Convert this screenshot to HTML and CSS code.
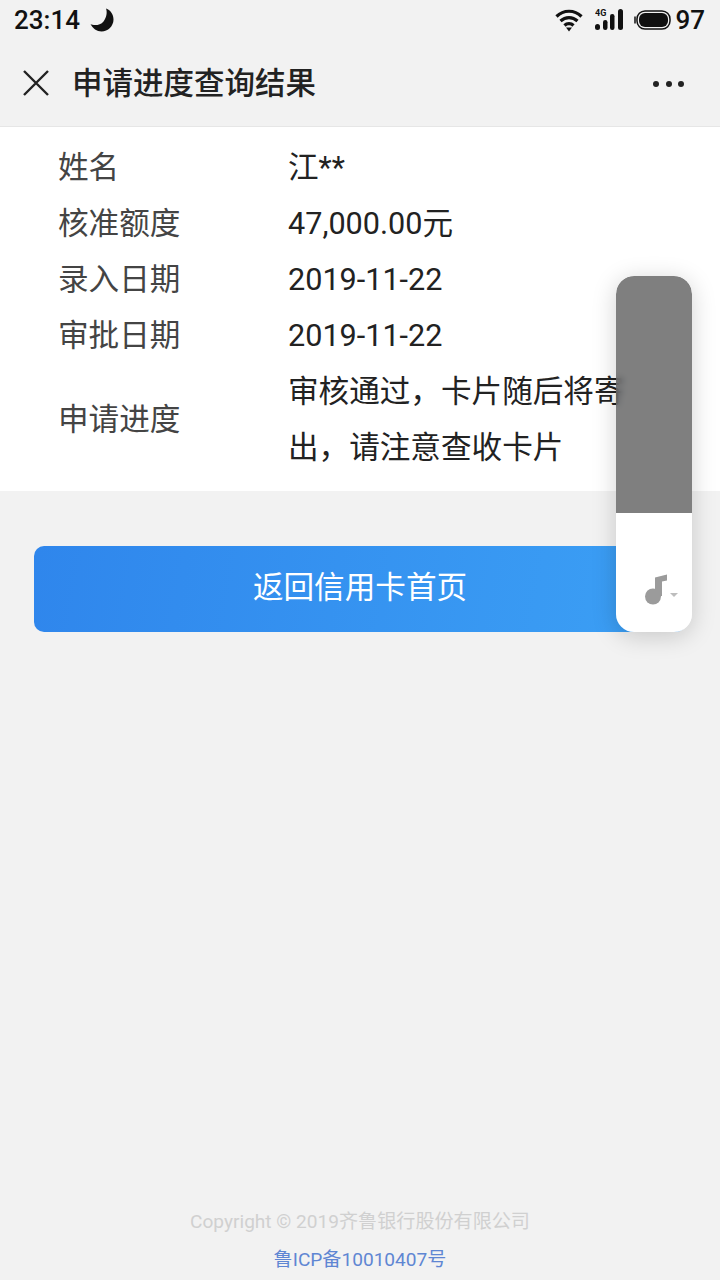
FILE: index.html
```html
<!DOCTYPE html>
<html lang="zh-CN">
<head>
    <meta charset="UTF-8">
    <meta name="viewport" content="width=device-width, initial-scale=1.0">
    <title>申请进度查询结果</title>
    <link rel="stylesheet" href="styles.css">
</head>
<body>
    <div class="status-bar">
        <div class="status-left">
            <span>23:14</span>
            <svg width="24" height="24" viewBox="0 0 24 24"><path d="M16 .5C21 2 23.500 7 23.500 11.500C23.500 18 18 23.500 11.500 23.500C7 23.500 2.500 20.500 .5 16C3 17.500 10 18 13.500 13.500C16.500 9.500 17.500 4.500 16 .5Z" fill="#111"/></svg>
        </div>
        <div class="status-right">
            <svg class="wifi" width="28" height="24" viewBox="0 0 28 24" fill="none" stroke="#111" stroke-width="3.200"><path d="M1.500 8.500C8.500 1.500 19.500 1.500 26.500 8.500"/><path d="M5.500 13C10.500 8.500 17.500 8.500 22.500 13"/><path d="M9.500 17.500C12 15 16 15 18.500 17.500"/><path d="M11 19.500L14 23.500L17 19.500Z" fill="#111" stroke="none"/></svg>
            <svg class="signal" width="28" height="24" viewBox="0 0 28 24"><text x="0" y="8" class="net-label">4G</text><rect x="0" y="16" width="5" height="6" rx="2.500" fill="#111"/><rect x="8" y="12" width="4.500" height="10" rx="2.200" fill="#111"/><rect x="15" y="6" width="4.500" height="16" rx="2.200" fill="#111"/><rect x="23" y="1" width="5" height="21" rx="2.500" fill="#111"/></svg>
            <svg class="battery" width="37" height="20" viewBox="0 0 37 20"><path d="M1 6.500V13.500" stroke="#111" stroke-width="1.500" fill="none"/><rect x="3" y="1" width="33" height="18" rx="8" fill="none" stroke="#111" stroke-width="1.500"/><rect x="5" y="3" width="29" height="14" rx="6" fill="#111"/></svg>
            <span>97</span>
        </div>
    </div>

    <header class="nav-bar">
        <svg width="28" height="28" viewBox="0 0 28 28" fill="none" stroke="#222" stroke-width="2.400"><path d="M2 2L26 26M26 2L2 26"/></svg>
        <h1>申请进度查询结果</h1>
        <div class="nav-more"><i></i><i></i><i></i></div>
    </header>

    <main class="result-card">
        <div class="row"><div class="label">姓名</div><div class="value">江**</div></div>
        <div class="row"><div class="label">核准额度</div><div class="value">47,000.00元</div></div>
        <div class="row"><div class="label">录入日期</div><div class="value">2019-11-22</div></div>
        <div class="row"><div class="label">审批日期</div><div class="value">2019-11-22</div></div>
        <div class="row"><div class="label">申请进度</div><div class="value">审核通过，卡片随后将寄出，请注意查收卡片</div></div>
    </main>

    <a class="back-btn" href="#">返回信用卡首页</a>

    <footer class="page-footer">
        <p class="copyright">Copyright © 2019齐鲁银行股份有限公司</p>
        <p class="icp">鲁ICP备10010407号</p>
    </footer>

    <!-- 浮动音乐面板 -->
    <div class="float-panel">
        <div class="float-top"></div>
        <div class="float-bottom">
            <svg width="34" height="32" viewBox="0 0 34 32"><circle cx="8" cy="22.500" r="8" fill="#9b9b9b"/><path d="M10 22V3.500L22 .5V6.500L17 7.500V22Z" fill="#9b9b9b"/><path d="M25 19H33L29 23Z" fill="#bdbdbd"/></svg>
        </div>
    </div>
</body>
</html>
```

FILE: styles.css
```css
html, body {
    margin: 0;
    padding: 0;
}
body {
    position: relative;
    width: 720px;
    height: 1280px;
    overflow: hidden;
    display: flex;
    flex-direction: column;
    background-color: #f2f2f2;
    color: #333;
    font-family: Roboto, "Noto Sans CJK SC", sans-serif;
}
.status-bar {
    height: 40px;
    display: flex;
    align-items: center;
    justify-content: space-between;
    padding: 0 15px 0 14px;
    color: #111;
    font-size: 26px;
    font-weight: 500;
}
.status-left, .status-right {
    display: flex;
    align-items: center;
}
.status-left svg {
    margin-left: 10px;
}
.wifi {
    margin-right: 12px;
}
.signal {
    margin-right: 11px;
}
.battery {
    margin-right: 4px;
}
.net-label {
    font-size: 9px;
    font-weight: 700;
    fill: #111;
}
.nav-bar {
    height: 86px;
    display: flex;
    align-items: center;
    padding: 0 36px 0 22px;
    border-bottom: 1px solid #e6e6e6;
}
.nav-bar h1 {
    flex: 1;
    margin: 0 0 0 22px;
    padding-bottom: 4px;
    font-size: 30.5px;
    font-weight: 500;
    color: #222;
}
.nav-more {
    display: flex;
    gap: 6.5px;
    margin-top: 2px;
}
.nav-more i {
    width: 6px;
    height: 6px;
    border-radius: 50%;
    background-color: #222;
}
.result-card {
    background-color: white;
    padding: 13px 0 15px;
}
.row {
    display: flex;
    align-items: center;
    padding-left: 58px;
    font-size: 30.6px;
    line-height: 56px;
}
.label {
    width: 230px;
    flex-shrink: 0;
    color: #444;
}
.value {
    width: 338px;
    color: #222;
}
.back-btn {
    display: block;
    margin: 55px 34px 0;
    height: 86px;
    line-height: 84px;
    border-radius: 10px;
    text-align: center;
    font-size: 30.6px;
    color: white;
    text-decoration: none;
    background: linear-gradient(100deg, #2f86ec, #3ca0f5);
}
.page-footer {
    margin-top: auto;
    padding-bottom: 1px;
    text-align: center;
    font-size: 19.1px;
    line-height: 38px;
}
.page-footer p {
    margin: 0;
}
.copyright {
    color: #d0d0d0;
}
.icp {
    color: #5f86d3;
}
.float-panel {
    position: absolute;
    top: 276px;
    left: 616px;
    width: 76px;
    height: 356px;
    border-radius: 18px;
    overflow: hidden;
    box-shadow: 0 4px 24px rgba(0, 0, 0, 0.18);
    display: flex;
    flex-direction: column;
}
/* 下の文字がぼけて透ける */
.float-top {
    height: 237px;
    background: linear-gradient(rgba(95, 95, 95, 0.8) 200px, #7f7f7f 200px);
    backdrop-filter: blur(3px);
}
.float-bottom {
    flex: 1;
    background-color: white;
    display: flex;
    align-items: flex-end;
    padding: 0 0 26px 29px;
}
```
